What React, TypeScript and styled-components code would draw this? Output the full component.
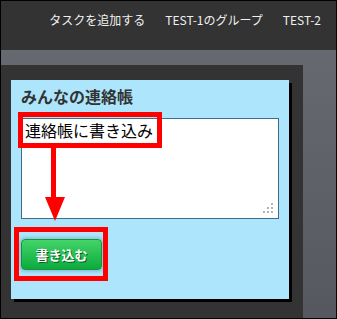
import React from 'react';
import styled, { createGlobalStyle } from 'styled-components';

const GlobalStyle = createGlobalStyle`
  html, body {
    margin: 0;
    padding: 0;
    background: #fff;
  }
  body {
    font-family: "Noto Sans CJK JP", "Noto Sans", sans-serif;
  }
`;

const Frame = styled.div`
  position: relative;
  width: 337px;
  height: 319px;
  box-sizing: border-box;
  border: 1px solid #000;
  background: linear-gradient(#696c73, #55585f);
  overflow: hidden;
  display: flex;
  flex-direction: column;
`;

const Header = styled.header`
  height: 49px;
  flex-shrink: 0;
  box-sizing: border-box;
  padding: 10px 15px 0 0;
  background: #333;
  display: flex;
  justify-content: flex-end;
  align-items: flex-start;
  gap: 20px;
`;

const NavItem = styled.a`
  color: #f0f0f0;
  font-size: 12px;
  line-height: 18px;
  text-decoration: none;
  white-space: nowrap;
`;

const Main = styled.main`
  flex: 1;
  display: flex;
  padding-top: 15px;
`;

const Column = styled.div`
  width: 302px;
  box-sizing: border-box;
  padding: 15px 14px 0 10px;
  background: #333;
`;

const Panel = styled.section`
  width: 278px;
  height: 219px;
  box-sizing: border-box;
  padding: 6px 10px 0;
  background: #ade6fc;
  box-shadow: 3px 3px 0 #000;
  display: flex;
  flex-direction: column;
  align-items: flex-start;
`;

const Title = styled.h2`
  margin: 0;
  font-size: 16px;
  line-height: 20px;
  font-weight: bold;
  color: #333;
`;

const NoteBox = styled.div`
  position: relative;
  margin-top: 12px;
  width: 258px;
  height: 101px;
`;

const Note = styled.textarea`
  display: block;
  width: 100%;
  height: 100%;
  box-sizing: border-box;
  padding: 1px 3px;
  border: 1px solid #3c6f8c;
  border-radius: 0;
  background: #fff;
  color: #000;
  font-family: "Noto Sans CJK JP", sans-serif;
  font-size: 16px;
  line-height: 20px;
  resize: none;
  outline: none;
`;

const Grip = styled.svg`
  position: absolute;
  right: 6px;
  bottom: 6px;
  pointer-events: none;
`;

const WriteButton = styled.button`
  margin-top: 20px;
  width: 81px;
  height: 31px;
  border: 1px solid #17923a;
  border-radius: 4px;
  background: linear-gradient(#44d468, #0bab3e);
  box-shadow: 0 0 3px 2px rgba(110, 170, 200, 0.55);
  color: #fff;
  font-family: "Noto Sans CJK JP", sans-serif;
  font-size: 13px;
  font-weight: bold;
  text-shadow: 1px 1px 0 #075a20;
  cursor: pointer;
`;

const Highlight = styled.div<{ $x: number; $y: number; $w: number; $h: number }>`
  position: absolute;
  left: ${({ $x }) => $x}px;
  top: ${({ $y }) => $y}px;
  width: ${({ $w }) => $w}px;
  height: ${({ $h }) => $h}px;
  box-sizing: border-box;
  border: 5px solid #ff0000;
  pointer-events: none;
`;

const Arrow = styled.svg`
  position: absolute;
  left: 39px;
  top: 146px;
`;

const gripDots = [
  [8, 0],
  [8, 4],
  [4, 4],
  [8, 8],
  [4, 8],
  [0, 8],
];

const App = () => (
  <>
    <GlobalStyle />
    <Frame>
      <Header>
        <NavItem href="#">タスクを追加する</NavItem>
        <NavItem href="#">TEST-1のグループ</NavItem>
        <NavItem href="#">TEST-2</NavItem>
      </Header>
      <Main>
        <Column>
          <Panel>
            <Title>みんなの連絡帳</Title>
            <NoteBox>
              <Note defaultValue="連絡帳に書き込み" />
              <Grip width="10" height="10" viewBox="0 0 10 10">
                {gripDots.map(([x, y]) => (
                  <rect key={`${x}-${y}`} x={x} y={y} width="2" height="2" fill="#b4b4b4" />
                ))}
              </Grip>
            </NoteBox>
            <WriteButton>書き込む</WriteButton>
          </Panel>
        </Column>
      </Main>
      <Highlight $x={17} $y={111} $w={144} $h={36} />
      <Arrow width="30" height="76" viewBox="0 0 30 76">
        <rect x="11" y="0" width="5" height="51" fill="#ff0000" />
        <polygon points="5,50 25,50 15,74" fill="#ff0000" />
      </Arrow>
      <Highlight $x={13} $y={226} $w={94} $h={54} />
    </Frame>
  </>
);

export default App;
